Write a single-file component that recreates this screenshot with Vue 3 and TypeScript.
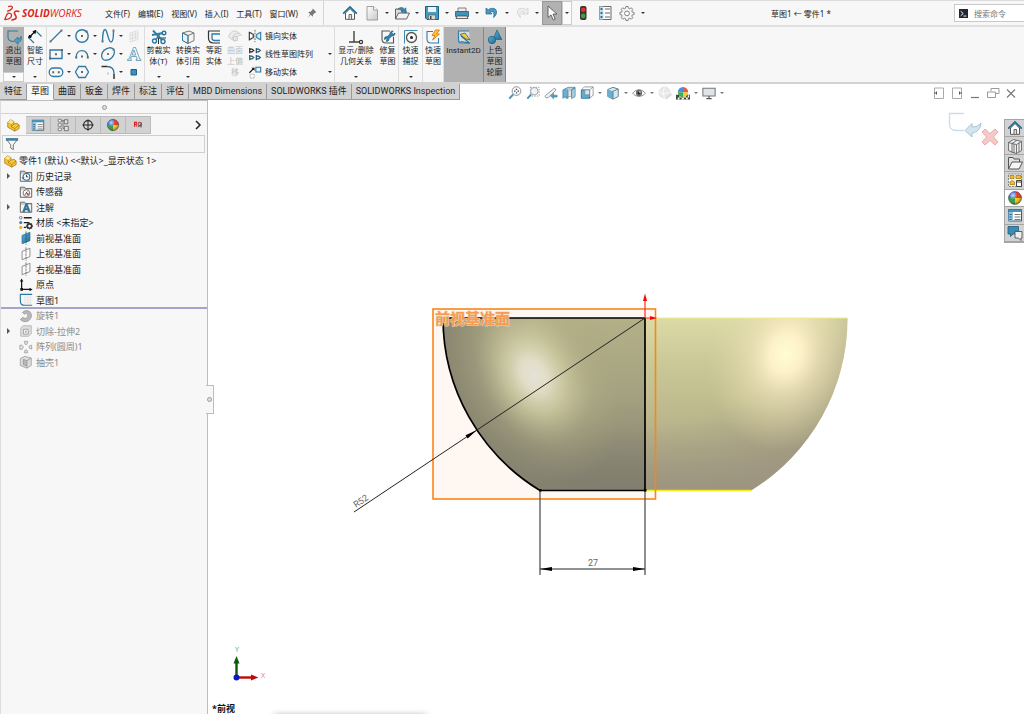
<script setup lang="ts">
import { ref } from 'vue'

interface Tool { icon: string; label: string; caret?: boolean; pressed?: boolean; wide?: boolean }
interface RibbonButton { icon: string; lines: string[]; size: string; caret?: boolean; pressed?: boolean; off?: boolean; rule?: boolean }
interface TreeItem { icon: string; text: string; expand?: boolean; root?: boolean }

const menus = ['文件(F)', '编辑(E)', '视图(V)', '插入(I)', '工具(T)', '窗口(W)']

const quickTools: Tool[] = [
  { icon: 'new', label: '新建', caret: true },
  { icon: 'open', label: '打开', caret: true },
  { icon: 'save', label: '保存', caret: true },
  { icon: 'print', label: '打印', caret: true },
  { icon: 'undo', label: '撤消', caret: true },
  { icon: 'redo', label: '重做', caret: true },
  { icon: 'cursor', label: '选择', caret: true, pressed: true },
  { icon: 'traffic', label: '重建模型', wide: true },
  { icon: 'options', label: '文件属性', wide: true },
  { icon: 'gear', label: '选项', caret: true, wide: true },
]

const sketchTools: Tool[] = [
  { icon: 'line', label: '直线', caret: true },
  { icon: 'circle', label: '圆', caret: true },
  { icon: 'spline', label: '样条曲线', caret: true },
  { icon: 'plane-off', label: '基准面' },
  { icon: 'rect', label: '边角矩形', caret: true },
  { icon: 'arc', label: '圆弧', caret: true },
  { icon: 'ellipse', label: '椭圆', caret: true },
  { icon: 'text', label: '文本' },
  { icon: 'slot', label: '槽口', caret: true },
  { icon: 'polygon', label: '多边形' },
  { icon: 'fillet', label: '圆角', caret: true },
  { icon: 'point', label: '点' },
]

const editButtons: RibbonButton[] = [
  { icon: 'trim', lines: ['剪裁实', '体(T)'], size: 'w27', caret: true },
  { icon: 'convert', lines: ['转换实', '体引用'], size: 'w32', caret: true },
  { icon: 'offset', lines: ['等距', '实体'], size: 'w20' },
  { icon: 'surf-off', lines: ['曲面', '上偏', '移'], size: 'w22', off: true },
]

const patternTools: Tool[] = [
  { icon: 'mirror', label: '镜向实体' },
  { icon: 'pattern', label: '线性草图阵列', caret: true },
  { icon: 'move', label: '移动实体', caret: true },
]

const moreButtons: RibbonButton[] = [
  { icon: 'relation', lines: ['显示/删除', '几何关系'], size: 'w42', caret: true },
  { icon: 'repair', lines: ['修复', '草图'], size: 'w22', rule: true },
  { icon: 'snap', lines: ['快速', '捕捉'], size: 'w24', caret: true, rule: true },
  { icon: 'rapid', lines: ['快速', '草图'], size: 'w21', rule: true },
  { icon: 'instant', lines: ['Instant2D'], size: 'w40', pressed: true, rule: true },
  { icon: 'shaded', lines: ['上色', '草图', '轮廓'], size: 'w22', pressed: true, rule: true },
]

const tabs = ['特征', '草图', '曲面', '钣金', '焊件', '标注', '评估', 'MBD Dimensions', 'SOLIDWORKS 插件', 'SOLIDWORKS Inspection']
const activeTab = ref('草图')

const viewTools: Tool[] = [
  { icon: 'fit', label: '整屏显示全图' },
  { icon: 'zoomarea', label: '局部放大' },
  { icon: 'prevview', label: '上一视图' },
  { icon: 'section', label: '剖面视图' },
  { icon: 'orient', label: '视图定向', caret: true },
  { icon: 'display', label: '显示样式', caret: true },
  { icon: 'eye', label: '隐藏/显示项目', caret: true },
  { icon: 'ball-off', label: '编辑外观' },
  { icon: 'scene', label: '应用布景', caret: true },
  { icon: 'monitor', label: '视图设置', caret: true },
]

const windowTools: Tool[] = [
  { icon: 'dock-l', label: '左侧停靠' },
  { icon: 'dock-r', label: '右侧停靠' },
  { icon: 'min', label: '最小化' },
  { icon: 'restore', label: '还原' },
  { icon: 'close', label: '关闭' },
]

const panelTabs: Tool[] = [
  { icon: 'part', label: '设计树' },
  { icon: 'list', label: '属性管理器' },
  { icon: 'config', label: '配置管理器' },
  { icon: 'target', label: '尺寸管理器' },
  { icon: 'ball', label: '外观管理器' },
  { icon: 'ext', label: '插件管理器' },
]
const activePanel = ref('part')

const activeItems: TreeItem[] = [
  { icon: 'part', text: '零件1 (默认) <<默认>_显示状态 1>', root: true },
  { icon: 'history', text: '历史记录', expand: true },
  { icon: 'sensor', text: '传感器' },
  { icon: 'annot', text: '注解', expand: true },
  { icon: 'material', text: '材质 <未指定>' },
  { icon: 'plane-on', text: '前视基准面' },
  { icon: 'plane', text: '上视基准面' },
  { icon: 'plane', text: '右视基准面' },
  { icon: 'origin', text: '原点' },
  { icon: 'sketch', text: '草图1' },
]
const rolledBack: TreeItem[] = [
  { icon: 'revolve', text: '旋转1' },
  { icon: 'cut', text: '切除-拉伸2', expand: true },
  { icon: 'circpat', text: '阵列(圆周)1' },
  { icon: 'shell', text: '抽壳1' },
]

const taskTabs: Tool[] = [
  { icon: 'home', label: '资源' },
  { icon: 'library', label: '设计库' },
  { icon: 'folder', label: '文件探索器' },
  { icon: 'palette', label: '视图调色板' },
  { icon: 'ball', label: '外观、布景和贴图', pressed: true },
  { icon: 'list', label: '自定义属性' },
  { icon: 'forum', label: '论坛' },
]
const command = ref('')
</script>

<template>
  <div class="app">
    <svg class="sprite" width="0" height="0" aria-hidden="true">
      <defs>
        <linearGradient id="gBlue" x1="0" y1="0" x2="1" y2="1"><stop offset="0" stop-color="#5fb0d6" /><stop offset="1" stop-color="#1c6a93" /></linearGradient>
        <linearGradient id="gGrey" x1="0" y1="0" x2="1" y2="1"><stop offset="0" stop-color="#fff" /><stop offset="1" stop-color="#c9c9c9" /></linearGradient>
        <radialGradient id="gShine" cx=".35" cy=".3" r=".7"><stop offset="0" stop-color="#fff" stop-opacity=".75" /><stop offset=".5" stop-color="#fff" stop-opacity="0" /><stop offset="1" stop-color="#000" stop-opacity=".35" /></radialGradient>
      </defs>
      <symbol id="home" viewBox="0 0 16 16"><path d="M3.500 8v6.300h9V8L8 3.600z" fill="#fff" stroke="#555" /><path d="M7 14V9.500h2.600V14" fill="#ddd" stroke="#555" stroke-width=".9" /><path d="M1.200 8.600 8 2l6.800 6.600" fill="none" stroke="#1f6e98" stroke-width="1.700" /></symbol>
      <symbol id="new" viewBox="0 0 16 16"><path d="M3 1.500h6.500L13.500 5v10H3z" fill="url(#gGrey)" stroke="#8a8a8a" stroke-width=".8" /><path d="M9.500 1.500V5h4" fill="#fff" stroke="#8a8a8a" stroke-width=".8" /></symbol>
      <symbol id="open" viewBox="0 0 16 16"><path d="M1.500 14V4H6l1 1.500h5V8" fill="#ddd" stroke="#555" stroke-width=".9" /><path d="M1.500 14 4.500 8H15.500l-3 6z" fill="#f4f4f4" stroke="#555" stroke-width=".9" /><path d="M3.500 4.500C6 1.500 9 2 10.500 4L12 2.800V8L7 7l1.500-1.400C7.500 4 5.500 3.500 3.500 4.500z" fill="#3888b0" stroke="#1c5f83" stroke-width=".5" /></symbol>
      <symbol id="save" viewBox="0 0 16 16"><path d="M1.500 1.500h13v13H3L1.500 13z" fill="#4a9ac0" stroke="#1d5d80" /><path d="M4 2h8v5H4z" fill="#f1f1f1" /><path d="M4.500 10h7v4.500h-7z" fill="#d8d8d8" stroke="#555" stroke-width=".6" /><path d="M6 11h1.500v3H6z" fill="#444" /></symbol>
      <symbol id="print" viewBox="0 0 16 16"><path d="M4 3h8v4H4z" fill="#eee" stroke="#666" stroke-width=".8" /><path d="M1.500 6.500h13v5h-13z" fill="#4193bb" stroke="#1d5d80" stroke-width=".8" /><path d="M3 11h10l1 2.500H2z" fill="#eee" stroke="#444" stroke-width=".8" /></symbol>
      <symbol id="undo" viewBox="0 0 16 16"><path d="M2 3v6h6L6 7c2.500-1.200 5 .5 3.500 5.500 4.500-3 4-9.500-1-9.200C6.500 3.400 5 4 4.300 4.800z" fill="#4a97bf" stroke="#1f668c" stroke-width=".7" /></symbol>
      <symbol id="redo" viewBox="0 0 16 16"><path d="M14 3v6H8l2-2c-2.500-1.200-5 .5-3.500 5.500C2 9.500 2.500 3 7.500 3.300c2 .1 3.500.7 4.200 1.500z" fill="#eee" stroke="#cfcfcf" stroke-width=".8" /></symbol>
      <symbol id="cursor" viewBox="0 0 16 16"><path d="M4 1v11.500l3-2.600 2.200 5 2-.9-2.200-4.900h4z" fill="#fff" stroke="#555" stroke-width=".9" /></symbol>
      <symbol id="traffic" viewBox="0 0 16 16"><rect x="5" y="1" width="6.500" height="14" rx="2" fill="#3d3030" /><circle cx="8.200" cy="4.700" r="2.300" fill="#e0342c" /><circle cx="8.200" cy="11" r="2.400" fill="#37a045" /></symbol>
      <symbol id="options" viewBox="0 0 16 16"><path d="M2.500 1.500h11.500v13H2.500z" fill="#fff" stroke="#666" /><path d="M2.500 1.500h4v13h-4z" fill="#c9dce6" /><path d="M3.500 4h2M3.500 8h2M3.500 12h2" stroke="#2576a2" stroke-width="2" /><path d="M8 4h5M8 8h5M8 12h5" stroke="#666" /></symbol>
      <symbol id="gear" viewBox="0 0 16 16"><path d="M6.900 1.500h2.200l.4 1.800 1.200.5 1.600-1 1.500 1.600-1 1.500.5 1.200 1.800.4v2l-1.800.4-.5 1.200 1 1.600-1.500 1.500-1.600-1-1.200.5-.4 1.800H6.900l-.4-1.800-1.200-.5-1.600 1-1.500-1.500 1-1.600-.5-1.200-1.800-.4v-2l1.800-.4.5-1.200-1-1.500 1.500-1.600 1.600 1 1.200-.5z" fill="#f6f6f6" stroke="#777" stroke-width=".9" /><circle cx="8" cy="8.400" r="2.400" fill="#fff" stroke="#777" stroke-width=".9" /></symbol>
      <symbol id="pin" viewBox="0 0 16 16"><path d="m9 2 5 5-2 .5-2.500 2.500-.5 3-2.700-2.700L2 14.500l3.500-5L3 6.800l3-.5L8.500 4z" fill="#777" /></symbol>
      <symbol id="prompt" viewBox="0 0 16 16"><path d="M0 0h16v16H0z" fill="#222733" /><path d="m3 4 4.500 4L3 12M8 12.500h5" fill="none" stroke="#fff" stroke-width="1.700" /></symbol>

      <symbol id="exit" viewBox="0 0 16 16"><path d="M12 2H2v6c0 3 2 4.500 6 4.500" fill="none" stroke="#2d7ba4" stroke-width="1.100" /><path d="M8 11.500 12 8v2c1.500 0 2.500-1 3-3 1.200 4-.5 6-3 6.300V15.500z" fill="#4a9cc4" stroke="#1d668d" stroke-width=".6" /></symbol>
      <symbol id="dimension" viewBox="0 0 16 16"><path d="M2 8.500 8.500 2" stroke="#111" stroke-width="1.300" /><path d="m1.500 9 1-3 2 2zM9 1.500 6 2.500l2 2z" fill="#111" stroke="#111" /><path d="M2 9l5 5M9.500 2.500l5 5" stroke="#2d7ba4" stroke-width="1.200" /></symbol>
      <symbol id="line" viewBox="0 0 16 16"><path d="M2.500 13.500 13.500 2.500" stroke="#3079a2" stroke-width="1.300" /><path d="M1.500 12.500h2v2h-2zM12.500 1.500h2v2h-2z" fill="#777" /></symbol>
      <symbol id="circle" viewBox="0 0 16 16"><circle cx="8" cy="8" r="6.200" fill="none" stroke="#3079a2" stroke-width="1.400" /><path d="M7 7h2v2H7zM11.500 2.500h2v2h-2z" fill="#666" /></symbol>
      <symbol id="spline" viewBox="0 0 16 16"><path d="M2.500 14C2.500 6 3.500 1.500 5 1.500c2.500 0 3 12.500 6 12.500 1.800 0 2.500-5 2.500-11" fill="none" stroke="#3079a2" stroke-width="1.400" /><path d="M1.500 12.500h2v2h-2zM12.500 1.500h2v2h-2z" fill="#777" /></symbol>
      <symbol id="plane-off" viewBox="0 0 16 16"><path d="M4 5 12 2.500v9L4 14z" fill="#f2f2f2" stroke="#d2d2d2" stroke-dasharray="1.500 1" /><path d="M6.500 4v9M9.500 3v9M4 8l8-2.500M4 11l8-2.500" stroke="#dadada" stroke-width=".8" /></symbol>
      <symbol id="rect" viewBox="0 0 16 16"><path d="M2 4h12v8.500H2z" fill="none" stroke="#3079a2" stroke-width="1.400" /><path d="M1 11.500h2v2H1zM13 3h2v2h-2zM7 7.300h2v2H7z" fill="#666" /></symbol>
      <symbol id="arc" viewBox="0 0 16 16"><path d="M2.200 11C2.200 2.500 13.800 2.500 13.800 11" fill="none" stroke="#3079a2" stroke-width="1.400" /><path d="M1.200 10.500h2v2h-2zM12.800 10.500h2v2h-2zM7 9.500h2v2H7z" fill="#666" /></symbol>
      <symbol id="ellipse" viewBox="0 0 16 16"><ellipse cx="8" cy="8" rx="7.200" ry="5.300" transform="rotate(-42 8 8)" fill="none" stroke="#3079a2" stroke-width="1.300" /><path d="M7 7h2v2H7zM12.500 2.500h2v2h-2zM3.500 3.500h1.500V5H3.500z" fill="#777" /></symbol>
      <symbol id="text" viewBox="0 0 16 16"><path d="M1.500 14.500h4v-1l-1-.3.8-2.700h5l.9 2.700-1.200.3v1h5v-1l-1.200-.5L9.500 1.500h-2L3 13l-1.500.5zM6 9l2-5 1.800 5z" fill="#f1f8fb" stroke="#5793b3" stroke-width=".8" /></symbol>
      <symbol id="slot" viewBox="0 0 16 16"><rect x="1.200" y="4" width="13.600" height="8.500" rx="4.200" fill="none" stroke="#3079a2" stroke-width="1.300" /><path d="M4.200 7.300h2v2h-2zM9.800 7.300h2v2h-2z" fill="#666" /></symbol>
      <symbol id="polygon" viewBox="0 0 16 16"><path d="M4.700 2.500h6.600L14.500 8l-3.200 5.500H4.700L1.500 8z" fill="none" stroke="#3079a2" stroke-width="1.300" /><path d="M7 7h2v2H7z" fill="#666" /></symbol>
      <symbol id="fillet" viewBox="0 0 16 16"><path d="M1.500 2.500H7M14 9.500V15" fill="none" stroke="#333" stroke-width="1.500" /><path d="M7 2.500c4.500 0 7 2.500 7 7" fill="none" stroke="#3079a2" stroke-width="1.300" /><path d="M7 8.500h2v2H7z" fill="#ccc" /></symbol>
      <symbol id="point" viewBox="0 0 16 16"><path d="M5 5.500h5.500V11H5z" fill="#3d8fb9" stroke="#1e6187" /></symbol>
      <symbol id="trim" viewBox="0 0 16 16"><path d="M7.500 8.500v6.500M7.500 9H15" stroke="#333" /><path d="m2 1.500 9 9.500M1 6l11-2" stroke="#2e7ea8" stroke-width="1.900" /><circle cx="12" cy="12.500" r="2" fill="#fff" stroke="#2576a2" stroke-width="1.400" /><circle cx="13" cy="4" r="1.800" fill="#fff" stroke="#2576a2" stroke-width="1.400" /><circle cx="3.500" cy="12" r="2" fill="#fff" stroke="#2576a2" stroke-width="1.400" /><path d="m5 10.500 4-6" stroke="#2e7ea8" stroke-width="1.500" /></symbol>
      <symbol id="convert" viewBox="0 0 16 16"><path d="M2.500 4 9 2l5 2v7.500L8 14.500l-5.500-3z" fill="#f3f3f3" stroke="#777" /><path d="M2.500 4v7.500L8 14.500v-8z" fill="#e6f2f8" stroke="#2a7ba5" /><path d="M2.500 4 8 6.500 14 4M8 6.500v8" fill="none" stroke="#777" /></symbol>
      <symbol id="offset" viewBox="0 0 16 16"><path d="M14 2H2.500v7c0 3 2 5 5 5H14" fill="none" stroke="#333" stroke-width="1.200" /><path d="M14 5H6v4c0 1.500 1 2.500 2.500 2.500H14" fill="none" stroke="#2a7ba5" stroke-width="1.300" /></symbol>
      <symbol id="surf-off" viewBox="0 0 16 16"><path d="M1.500 8C3 3 6 1.500 9 2l5.500 4c-3.500 0-5.500 2-6.500 6.500z" fill="#ececec" stroke="#cfcfcf" /><path d="M5 10.500C6 6 8.500 4 12 4.200M6.500 7.500h4v4h-4z" fill="none" stroke="#cfcfcf" /></symbol>
      <symbol id="mirror" viewBox="0 0 16 16"><path d="M8 1v14" stroke="#555" stroke-dasharray="2 1.200" /><path d="M1.500 3v10M1.500 4.500h1.500c1 0 1 1.500 3 1.500v4c-2 0-2 1.500-3 1.500H1.500" fill="#fff" stroke="#333" stroke-width="1.300" /><path d="M14.500 3v10M14.500 4.500H13c-1 0-1 1.500-3 1.500v4c2 0 2 1.500 3 1.500h1.500" fill="#e1f0f7" stroke="#2e7ea8" stroke-width="1.300" /></symbol>
      <symbol id="pattern" viewBox="0 0 16 16"><g fill="#fff" stroke-width="1.400"><path d="M2 1v6M2 2.500h2.500L6.500 4 4.500 5.500H2" stroke="#222" /><path d="M9.500 1v6M9.500 2.500H12L14 4l-2 1.500H9.500M2 9v6M2 10.500h2.500l2 1.500-2 1.500H2M9.500 9v6M9.500 10.500H12l2 1.500-2 1.500H9.500" stroke="#25566d" /></g></symbol>
      <symbol id="move" viewBox="0 0 16 16"><path d="M9 2.500h5.500V8H9z" fill="#eaf5fa" stroke="#2475a0" stroke-width="1.200" /><path d="M2.500 10.500h4.500V15H2.500z" fill="#fff" stroke="#bbb" /><path d="m1.500 9 5-5" stroke="#111" stroke-width="1.300" /><path d="M7.500 3v3.500L4 3z" fill="#111" /></symbol>
      <symbol id="relation" viewBox="0 0 16 16"><path d="M6 2v11M1 13h10" stroke="#444" stroke-width="1.400" /><circle cx="13" cy="13" r="1.600" fill="#fff" stroke="#333" stroke-width="1.200" /></symbol>
      <symbol id="repair" viewBox="0 0 16 16"><path d="M10 2H2v8c0 2.500 1.500 4 4 4h7.500V8" fill="none" stroke="#555" stroke-width="1.100" /><path d="M4.500 10.500c-.5-2 1-3.300 2.500-2.800L10 5c-.5-2 1.500-3.500 3.200-3l-1.400 1.700 1.400 1.500L15 4c.3 2-1.300 3.500-3.200 3L9 9.800c.3 1.800-1.500 3-3 2.500l1.200-1.500-1-1z" fill="#3282ac" stroke="#16506f" stroke-width=".6" /></symbol>
      <symbol id="snap" viewBox="0 0 16 16"><path d="M1.500 1.500h13M1.500 1.500v13" stroke="#2d7ba4" stroke-width=".9" /><circle cx="8.500" cy="8.500" r="5" fill="none" stroke="#555" stroke-width="1.300" /><circle cx="8.500" cy="8.500" r="1.500" fill="#222" /></symbol>
      <symbol id="rapid" viewBox="0 0 16 16"><path d="M8 2.500H2V10c0 2.500 1.500 4 4 4h7.500V9" fill="none" stroke="#2f7ea7" stroke-width="1.100" /><path d="m10.500 1-3.500 5.500h3L7.500 11 14.500 5H11.500L14.500 1z" fill="#ffc629" stroke="#e0671c" stroke-width=".8" /></symbol>
      <symbol id="instant" viewBox="0 0 16 16"><path d="M13 2H2.500v9c0 2 1 3 3 3H14" fill="#cfe0e9" stroke="#317fa7" stroke-width="1.200" /><path d="M4 5.500 9 4l5 7-4-1z" fill="#f6cf3e" stroke="#444" stroke-width=".7" /><path d="M4.500 12.500 14 14M5 7l8 6.500" stroke="#2b6f92" stroke-width="1.100" /></symbol>
      <symbol id="shaded" viewBox="0 0 16 16"><path d="m10 1 4.800 9.500H6z" fill="url(#gBlue)" stroke="#1c5f83" stroke-width=".7" /><circle cx="5" cy="11" r="3.700" fill="url(#gBlue)" stroke="#1c5f83" stroke-width=".8" /></symbol>

      <symbol id="fit" viewBox="0 0 16 16"><circle cx="9.700" cy="5.800" r="5" fill="#f4f8fa" stroke="#888" /><path d="m6 9.500-4.500 5" stroke="#4790b6" stroke-width="2.200" /><path d="M9.700 3v1.500M9.700 7v1.500M7 5.800h1.500M11 5.800h1.500" stroke="#444" stroke-width="1.300" /></symbol>
      <symbol id="zoomarea" viewBox="0 0 16 16"><path d="M5 1.500h10v10H5z" fill="none" stroke="#888" stroke-dasharray="1.500 1.500" /><circle cx="9.500" cy="6" r="4.300" fill="#eef5f9" stroke="#999" /><path d="m6 9.500-4.500 5" stroke="#4790b6" stroke-width="2.200" /></symbol>
      <symbol id="prevview" viewBox="0 0 16 16"><path d="M1.500 11 10 4c2-2.500 4.500-.5 3 1.500l-8 7.500c-2 1.500-4.500 0-3.500-2z" fill="#f4f4f4" stroke="#888" /><path d="m7.500 11.500 3.500-3v2h4v2.200h-4v2z" fill="#4e9cc4" stroke="#2b7093" stroke-width=".5" /></symbol>
      <symbol id="section" viewBox="0 0 16 16"><path d="M1 4.500 4.500 3 7 4.500V14H4.500V12L1 14z" fill="#6cb0d1" stroke="#2b7093" stroke-width=".7" /><path d="M7 4.500h4V12H7z" fill="#e4e4e4" stroke="#888" stroke-width=".7" /><path d="M11 4.500 15 2v10l-4 2.500zM3 3.500 7 1.500h8l-4 3" fill="#a9d0e3" stroke="#2b7093" stroke-width=".7" /></symbol>
      <symbol id="orient" viewBox="0 0 16 16"><path d="M5 1h10v10M1.500 4.500 5 1M11 4.500 15 1M11 14l4-3.500" fill="none" stroke="#888" stroke-width=".9" /><path d="M1.500 4.500H11V14H1.500z" fill="#62aace" stroke="#2b7093" /><path d="M5.500 4.500H11V10H5.500z" fill="#cfe5f0" stroke="#777" stroke-width=".6" /></symbol>
      <symbol id="display" viewBox="0 0 16 16"><path d="m2 4 6-2.500 6 2V12l-6 3-6-3z" fill="#d5e9f3" stroke="#5d7683" /><path d="m2 4 6 2v9l-6-3z" fill="#68afd2" /><path d="m8 6 6-2.500M8 6v9" stroke="#5d7683" /></symbol>
      <symbol id="eye" viewBox="0 0 16 16"><path d="M.8 8.300C4.500 3 11.500 3 15.200 8.300 11.500 13 4.500 13 .8 8.300z" fill="#fff" stroke="#888" stroke-width="1.100" /><circle cx="8" cy="8" r="3.600" fill="#6d6d6d" /><circle cx="8" cy="8" r="1.500" fill="#222" /><circle cx="9" cy="6.800" r=".9" fill="#fff" /></symbol>
      <symbol id="ball-off" viewBox="0 0 16 16"><circle cx="7.500" cy="7.500" r="6.300" fill="#e9e9e9" stroke="#dedede" /><path d="M7.500 1.500c-2 4-2 8 0 12M1.500 7.500c4 1.500 8 1.500 12 0" fill="none" stroke="#fafafa" /><path d="M9 14.500 15.500 9" stroke="#ddd" stroke-width="2.500" /></symbol>
      <symbol id="ball" viewBox="0 0 16 16"><path d="M8 8V1.500A6.500 6.500 0 0 0 1.500 8z" fill="#2b66d0" /><path d="M8 8h6.500A6.500 6.500 0 0 0 8 1.500z" fill="#e53427" /><path d="M8 8v6.500A6.500 6.500 0 0 0 14.500 8z" fill="#f6c915" /><path d="M8 8H1.500A6.500 6.500 0 0 0 8 14.500z" fill="#2f9c3c" /><circle cx="8" cy="8" r="6.500" fill="url(#gShine)" stroke="#333" stroke-width=".5" /></symbol>
      <symbol id="scene" viewBox="0 0 16 16"><path d="M0 10h16v5.500H0z" fill="#444" /><path d="M2 13h2v2.500H2zM6.500 13h2.500v2.500H6.500zM11.500 13h2v2.500h-2zM4 10.500h2.500V13H4zM9 10.500h2.500V13H9zM13.500 10.500H15V13h-1.500z" fill="#fff" /><path d="M8 7V1a6 6 0 0 0-6 6z" fill="#4a8fe0" /><path d="M8 7h6a6 6 0 0 0-6-6z" fill="#ec564b" /><path d="M8 7v6a6 6 0 0 0 6-6z" fill="#edcb3b" /><path d="M8 7H2a6 6 0 0 0 6 6z" fill="#46aa54" /></symbol>
      <symbol id="monitor" viewBox="0 0 16 16"><path d="M1 2.500h14v9H1z" fill="#dfe4e6" stroke="#777" stroke-width="1.200" /><path d="M8 11.500v2.500M5 14.500h6" stroke="#555" stroke-width="1.300" /></symbol>
      <symbol id="dock-l" viewBox="0 0 16 16"><path d="M3.500 3h9v10.500h-9z" fill="#fff" stroke="#aaa" /><path d="M3 8h3M5.500 6.500v3" stroke="#555" /></symbol>
      <symbol id="dock-r" viewBox="0 0 16 16"><path d="M3.500 3h9v10.500h-9z" fill="#fff" stroke="#aaa" /><path d="M10 8h3M10.500 6.500v3" stroke="#555" /></symbol>
      <symbol id="min" viewBox="0 0 16 16"><path d="M4 12.500h8" stroke="#777" stroke-width="1.200" /></symbol>
      <symbol id="restore" viewBox="0 0 16 16"><path d="M6 6V3.500h8v5h-3" fill="none" stroke="#999" /><path d="M2.500 7H10.500v5.500h-8z" fill="#fff" stroke="#999" /></symbol>
      <symbol id="close" viewBox="0 0 16 16"><path d="m4 4.500 8 8M12 4.500l-8 8" stroke="#777" stroke-width="1.100" /></symbol>

      <symbol id="part" viewBox="0 0 16 16"><path d="m2 5 3-3 4 2v3l3.500-1L15 8v4l-5 3-8-4.500z" fill="#f5c83a" stroke="#a87b12" stroke-width=".9" /><path d="m2 5 4 2v3l4 2 5-4M6 7l3-3M6 10l3-3M10 12v3" fill="none" stroke="#a87b12" stroke-width=".8" /><path d="m2 5 3-3 4 2-3 3z" fill="#fbe48a" /></symbol>
      <symbol id="list" viewBox="0 0 16 16"><path d="M1.500 2.500h13v11.500h-13z" fill="#fff" stroke="#3a5c70" /><path d="M1.500 2.500h13V5h-13z" fill="#4494bc" /><path d="M1.500 5H6v9H1.500z" fill="#8fc1da" /><path d="M2.500 7.500h2M2.500 10h2M2.500 12.500h2" stroke="#1d5d80" /><path d="M7.500 7.500h6M7.500 10h6M7.500 12.500h6" stroke="#777" /></symbol>
      <symbol id="config" viewBox="0 0 16 16"><path d="M2.500 1.500H6v3H2.500zM2.500 6.500H6v3H2.500zM2.500 11.500H6v3H2.500z" fill="#fff" stroke="#777" /><path d="M6 3h4M8 3v9h2" fill="none" stroke="#777" /><path d="M9.500 2h4v4.500h-4zM9.500 9.500h4.500v5H9.500z" fill="#e6e6e6" stroke="#666" /></symbol>
      <symbol id="target" viewBox="0 0 16 16"><circle cx="8" cy="8" r="5" fill="none" stroke="#222" stroke-width="1.200" /><path d="M8 1.500v13M1.500 8h13" stroke="#222" stroke-width="1.100" /></symbol>
      <symbol id="ext" viewBox="0 0 16 16"><path d="M4 5v5M6 5v5M3.500 5h3.500M3.500 7.500h3" stroke="#d22" stroke-width="1.200" /><circle cx="10" cy="7" r="2" fill="none" stroke="#a44" stroke-width="1.200" /><path d="M8 10.500 12 6M11.500 8v3" stroke="#444" /></symbol>
      <symbol id="funnel" viewBox="0 0 16 16"><path d="M1.500 2.500h13L9.500 9v5.500l-3-2V9z" fill="#f4f4f4" stroke="#666" /><path d="M1.500 1.800h13v2h-13z" fill="#3b8cb5" stroke="#1d5d80" stroke-width=".6" /></symbol>
      <symbol id="folderbase" viewBox="0 0 16 16"><path d="M1.500 14V2.500h5l1 1.500h7V14z" fill="#f4f4f4" stroke="#555" /><path d="M1.500 4.500h13" stroke="#777" stroke-width=".7" /></symbol>
      <symbol id="history" viewBox="0 0 16 16"><use href="#folderbase" /><circle cx="8.500" cy="9" r="3.800" fill="#fff" stroke="#2b759b" stroke-width="1.300" /><path d="M8.500 6.500V9h2" fill="none" stroke="#222" /><path d="M3 9.500h3.500L4.500 12z" fill="#2b759b" /></symbol>
      <symbol id="sensor" viewBox="0 0 16 16"><use href="#folderbase" /><circle cx="8.500" cy="9.200" r="3.800" fill="#fff" stroke="#666" /><path d="m7 11 2.500-3.500" stroke="#222" /><circle cx="10" cy="10.300" r="1.300" fill="#d33" /></symbol>
      <symbol id="annot" viewBox="0 0 16 16"><use href="#folderbase" /><path d="M4 13.500 7.500 4.500h2l3.500 9h-2.500l-.6-2H7l-.6 2zM7.500 9.800h2L8.500 7z" fill="#2b7ba5" stroke="#174f6d" stroke-width=".4" /></symbol>
      <symbol id="material" viewBox="0 0 16 16"><circle cx="2" cy="2" r="1.500" fill="#fff" stroke="#555" stroke-width=".8" /><circle cx="2" cy="7.500" r="1.800" fill="#3a8ab4" /><circle cx="2" cy="13" r="1.800" fill="#e7b41f" /><path d="M5.500 2h9M5.500 7.500h6M5.500 13h3" stroke="#222" stroke-width="1.500" /><circle cx="12" cy="11.500" r="2.500" fill="#fff" stroke="#333" stroke-width="1.900" /><path d="M12 7.500v1.500M12 14v1.500M8.200 11.500h1.300M14.500 11.500h1.300M9.300 8.800l1 1M14.700 8.800l-1 1M9.300 14.200l1-1M14.700 14.200l-1-1" stroke="#333" stroke-width="1.300" /></symbol>
      <symbol id="plane-on" viewBox="0 0 16 16"><path d="m3.500 5 9-3.500v9.500l-9 3.500z" fill="url(#gBlue)" stroke="#1d668d" stroke-width=".8" /><path d="M8 .5v15" stroke="#154f6e" stroke-width=".9" stroke-dasharray="2.500 1" /></symbol>
      <symbol id="plane" viewBox="0 0 16 16"><path d="m3.500 5 9-3.500v9.500l-9 3.500z" fill="#fbfbfb" stroke="#777" stroke-width=".9" /><path d="M8 .5v15" stroke="#555" stroke-width=".9" stroke-dasharray="2.500 1" /></symbol>
      <symbol id="origin" viewBox="0 0 16 16"><path d="M3 3v10h10" fill="none" stroke="#111" stroke-width="1.400" /><path d="m3 .5 2 3.500H1zM15.500 13 12 11v4zM1.500 11.500h3v3h-3z" fill="#111" /></symbol>
      <symbol id="sketch" viewBox="0 0 16 16"><path d="M6 5h9M6 8h9M6 11h9M7 2v11M10 2v11M13 2v11" stroke="#e4e4e4" stroke-width=".8" /><path d="M15 1.500H1.500V9c0 3 1.500 5 5 5H15" fill="none" stroke="#2b7ba5" stroke-width="1.300" /></symbol>
      <symbol id="revolve" viewBox="0 0 16 16"><path d="M4 4C9-1 15.500 3.500 14 9s-8 7.500-12.500 3l3-2.500c2 2 5 1.500 5.500-1.500S8 4.500 6.500 6z" fill="#b9b9b9" stroke="#8f8f8f" stroke-width=".8" /></symbol>
      <symbol id="cut" viewBox="0 0 16 16"><path d="M2 4.500 5 2h9v9l-3 3H2z" fill="#dedede" stroke="#b5b5b5" /><path d="M5 6h5.500v5.500H5z" fill="#fff" stroke="#999" /><path d="M6.500 7.500h2.500V10H6.500z" fill="#b4b4b4" /></symbol>
      <symbol id="circpat" viewBox="0 0 16 16"><g fill="#e6e6e6" stroke="#a0a0a0"><path d="M6 1.500h4L9 5H7zM6 14.500h4L9 11.500H7zM14.500 6v4.500L11.500 9V7zM1 6h2.500l1.500 2-1.500 2.500H1z" /></g></symbol>
      <symbol id="shell" viewBox="0 0 16 16"><path d="M1.500 4 7 1.500l7 2V12L9 15l-7.500-3z" fill="#dcdcdc" stroke="#a5a5a5" /><path d="M5 5v6l4 1.500V6.500zM9 6.500l5-3M9 12.500V15" fill="#b8b8b8" stroke="#999" /></symbol>
      <symbol id="library" viewBox="0 0 16 16"><g fill="#eee" stroke="#555" stroke-width=".8"><path d="m1.500 4.500 5-3 8 2v9l-5 3-3.500-1-4.500-2z" /><path d="M1.500 4.500 5 5.500v9M5 5.500l4.500 1v9M9.500 6.500l5-3M5 5.500l4.500-3M7 6v9M12 5v9" fill="none" /></g></symbol>
      <symbol id="folder" viewBox="0 0 16 16"><path d="M1.500 14V2.500H6l1 1.500h5.500v3" fill="#e2e2e2" stroke="#555" /><path d="m1.500 14 3.500-7h10.500L12 14z" fill="#f6f6f6" stroke="#555" /></symbol>
      <symbol id="palette" viewBox="0 0 16 16"><path d="M1.500 2h13v12.500h-13z" fill="#f1f1f1" stroke="#888" stroke-dasharray="2 1" /><path d="M3 3.500h4v3H3zM9 3.500h5v3H9zM3 12.500V10l2-1.500L7.500 10v2.500z" fill="#f2c02a" stroke="#9b7410" stroke-width=".7" /><path d="M9.500 8.500h5v6h-5z" fill="#fff" stroke="#444" /><path d="M9.500 10h5" stroke="#444" /></symbol>
      <symbol id="forum" viewBox="0 0 16 16"><path d="M1 1.500h10.500V9H6l-2.500 2.500V9H1z" fill="#3a8ab4" stroke="#1d5d80" stroke-width=".8" /><path d="M8 6.500h7V13h-1v2.500L11.500 13H8z" fill="#eee" stroke="#555" stroke-width=".9" /></symbol>
    </svg>

    <header class="titlebar">
      <div class="brand-area">
        <svg class="ds" viewBox="0 0 16 17" aria-hidden="true">
          <g fill="none" stroke="#d9261c" stroke-linecap="round">
            <path d="M4.500 1.500C8 .5 9.500 2 7.500 4 6.500 5 5 5.800 3.500 6.200" stroke-width="1.300" />
            <path d="M.8 14.500C3 8.500 3.500 7.500 6.500 8.500c2 1 1.500 5.500-5.200 6" stroke-width="1.300" />
            <path d="M14.800 6.500c-3-1.500-5.500.5-3.800 3s2.500 4.500-3 5.500" stroke-width="1.500" />
          </g>
        </svg>
        <span class="brand"><b>SOLID</b>WORKS</span>
        <nav class="menus"><button v-for="m in menus" :key="m" type="button">{{ m }}</button></nav>
        <button type="button" class="pin" aria-label="固定"><svg class="ic12" viewBox="0 0 16 16"><use href="#pin" /></svg></button>
      </div>
      <div class="quick">
        <button type="button" class="q home" aria-label="主页"><svg class="ic"><use href="#home" /></svg></button>
        <div v-for="t in quickTools" :key="t.icon" class="split" :class="{ pressed: t.pressed, wide: t.wide }">
          <button type="button" class="q" :aria-label="t.label"><svg class="ic"><use :href="'#' + t.icon" /></svg></button>
          <button v-if="t.caret" type="button" class="drop" :aria-label="t.label + '菜单'"><i class="caret" /></button>
        </div>
      </div>
      <h1 class="doc">草图1 ← 零件1 *</h1>
      <label class="search">
        <svg class="ic9"><use href="#prompt" /></svg>
        <input v-model="command" type="text" placeholder="搜索命令" aria-label="搜索命令">
      </label>
    </header>

    <section class="ribbon">
      <div class="exit">
        <button type="button" class="exit-main"><svg class="ic"><use href="#exit" /></svg><span>退出</span><span>草图</span></button>
        <button type="button" class="exit-drop" aria-label="退出草图菜单"><i class="caret" /></button>
      </div>
      <button type="button" class="big w22"><svg class="ic"><use href="#dimension" /></svg><span>智能</span><span>尺寸</span><i class="caret" /></button>
      <div class="grid">
        <div v-for="t in sketchTools" :key="t.icon" class="cell">
          <button type="button" :aria-label="t.label"><svg class="ic"><use :href="'#' + t.icon" /></svg></button>
          <button v-if="t.caret" type="button" class="drop" :aria-label="t.label + '菜单'"><i class="caret" /></button>
        </div>
      </div>
      <button v-for="b in editButtons" :key="b.icon" type="button" class="big" :class="[b.size, { off: b.off }]" :disabled="b.off">
        <svg class="ic"><use :href="'#' + b.icon" /></svg><span v-for="l in b.lines" :key="l">{{ l }}</span><i v-if="b.caret" class="caret" />
      </button>
      <div class="rows">
        <button v-for="t in patternTools" :key="t.icon" type="button"><svg class="ic14"><use :href="'#' + t.icon" /></svg><span>{{ t.label }}</span><i v-if="t.caret" class="caret" /></button>
      </div>
      <button v-for="b in moreButtons" :key="b.icon" type="button" class="big" :class="[b.size, { rule: b.rule, pressed: b.pressed }]">
        <svg class="ic"><use :href="'#' + b.icon" /></svg><span v-for="l in b.lines" :key="l">{{ l }}</span><i v-if="b.caret" class="caret" />
      </button>
    </section>

    <nav class="tabs">
      <button v-for="t in tabs" :key="t" type="button" :class="{ active: t === activeTab }" @click="activeTab = t">{{ t }}</button>
    </nav>

    <main class="work">
      <aside class="panel">
        <div class="grip"><i class="dot" /></div>
        <div class="ptabs">
          <button v-for="t in panelTabs" :key="t.icon" type="button" :aria-label="t.label" :class="{ active: t.icon === activePanel }" @click="activePanel = t.icon"><svg class="ic14"><use :href="'#' + t.icon" /></svg></button>
          <button type="button" class="more" aria-label="更多"><svg class="ic12" viewBox="0 0 12 12"><path d="m4 2 4 4-4 4" fill="none" stroke="#222" stroke-width="1.500" /></svg></button>
        </div>
        <label class="filter"><svg class="ic14"><use href="#funnel" /></svg><input type="text" aria-label="过滤"></label>
        <ul class="tree live">
          <li v-for="n in activeItems" :key="n.text" :class="{ root: n.root }"><i class="exp" :class="{ on: n.expand }" /><svg class="ic14"><use :href="'#' + n.icon" /></svg><span>{{ n.text }}</span></li>
        </ul>
        <ul class="tree rolled">
          <li v-for="n in rolledBack" :key="n.text"><i class="exp" :class="{ on: n.expand }" /><svg class="ic14"><use :href="'#' + n.icon" /></svg><span>{{ n.text }}</span></li>
        </ul>
        <button type="button" class="splitter" aria-label="折叠面板"><i class="dot" /></button>
      </aside>

      <section class="view">
        <svg class="model" viewBox="208 100 816 614" preserveAspectRatio="xMidYMid meet" role="img" aria-label="零件1">
          <defs>
            <linearGradient id="lBase" x1="0" y1="0" x2="0" y2="1"><stop offset="0" stop-color="#b3b088" /><stop offset=".45" stop-color="#a4a180" /><stop offset="1" stop-color="#7f7c6e" /></linearGradient>
            <radialGradient id="lSpot" gradientUnits="userSpaceOnUse" cx="0" cy="0" r="100" gradientTransform="translate(534 375) rotate(-28) scale(.82 1.150)"><stop offset="0" stop-color="#e5e2d8" /><stop offset=".15" stop-color="#e0ddc6" /><stop offset=".35" stop-color="#cfcca3" stop-opacity=".8" /><stop offset=".65" stop-color="#b5b289" stop-opacity=".35" /><stop offset="1" stop-color="#aaa77c" stop-opacity="0" /></radialGradient>
            <radialGradient id="lEdge" gradientUnits="userSpaceOnUse" cx="645" cy="318" r="204"><stop offset=".55" stop-color="#827f6f" stop-opacity="0" /><stop offset=".86" stop-color="#827f6f" stop-opacity=".75" /><stop offset="1" stop-color="#86836f" stop-opacity=".9" /></radialGradient>
            <linearGradient id="rBase" x1="0" y1="0" x2="0" y2="1"><stop offset="0" stop-color="#dcdba8" /><stop offset=".25" stop-color="#cbc997" /><stop offset=".6" stop-color="#bab68c" /><stop offset="1" stop-color="#9d9781" /></linearGradient>
            <radialGradient id="rEdge" gradientUnits="userSpaceOnUse" cx="645" cy="250" r="250"><stop offset=".7" stop-color="#9c937f" stop-opacity="0" /><stop offset="1" stop-color="#9c937f" stop-opacity=".7" /></radialGradient>
            <radialGradient id="rSpot" gradientUnits="userSpaceOnUse" cx="0" cy="0" r="100" gradientTransform="translate(786 354) rotate(12) scale(.78 .98)"><stop offset="0" stop-color="#fffdd2" /><stop offset=".2" stop-color="#fff3cb" stop-opacity=".95" /><stop offset=".45" stop-color="#ede1b8" stop-opacity=".7" /><stop offset="1" stop-color="#dcd6a0" stop-opacity="0" /></radialGradient>
            <filter id="soft" x="-20%" y="-200%" width="140%" height="500%"><feGaussianBlur stdDeviation="3" /></filter>
            <path id="right" d="M645 318H847.500A202 202 0 0 1 751 490.500H645z" />
            <path id="left" d="M645 318H443A202 202 0 0 0 540 490.500H645z" />
          </defs>
          <rect x="433" y="309" width="222.500" height="190" fill="#fff7f2" />
          <use href="#right" fill="url(#rBase)" /><use href="#right" fill="url(#rEdge)" /><use href="#right" fill="url(#rSpot)" />
          <path d="M655 318H847" stroke="#f0ee7a" stroke-width="1" />
          <path d="M645 490.500H751" stroke="#f4ec1c" stroke-width="1.500" />
          <use href="#left" fill="url(#lBase)" /><use href="#left" fill="url(#lEdge)" /><use href="#left" fill="url(#lSpot)" />
          <use href="#left" fill="none" stroke="#000" stroke-width="1.700" />
          <rect x="433" y="309" width="222.500" height="190" fill="none" stroke="#fb8519" stroke-width="1.600" />
          <g stroke="#222" stroke-width="1"><path d="M645 318 354 512" /><path d="M540 491v84M645 491v84" stroke="#555" stroke-width="1.300" /><path d="M540 569h105" /></g>
          <path d="m477 430-11.500 5.200 2.200 3.300zM540 569l12-2v4zM645 569l-12-2v4zM539 489h2.500v2.500H539zM644 489h2.500v2.500H644z" fill="#000" />
          <path d="M645 318v-18M645 318h8" stroke="#ff2a2a" stroke-width="1.200" /><path d="m645 293.500 2 7.500h-4zM657 318l-7-2v4z" fill="#f00" />
          <text x="588" y="566" class="dim">27</text>
          <text class="dim" transform="translate(356 508) rotate(-33.700)">R52</text>
          <text x="435" y="324" class="plane-name">前视基准面</text>
          <path d="M236.500 677v-14" stroke="#0a5a0a" stroke-width="2.400" /><path d="m236.500 656 3 7.500h-6z" fill="#0a5a0a" />
          <path d="M237 677.500h14" stroke="#c00808" stroke-width="2.400" /><path d="m258.500 677.500-7.500 3v-6z" fill="#c00808" />
          <circle cx="236.500" cy="677.500" r="3" fill="#0a18c4" />
          <text x="235" y="652" class="axis y">Y</text><text x="261" y="678" class="axis x">X</text>
          <rect x="274" y="715" width="152" height="6" fill="#aaa" filter="url(#soft)" />
        </svg>
        <div class="view-name">*前视</div>

        <div class="hud">
          <div v-for="t in viewTools" :key="t.icon" class="vt">
            <button type="button" :aria-label="t.label"><svg class="ic14"><use :href="'#' + t.icon" /></svg></button>
            <button v-if="t.caret" type="button" class="vdrop" :aria-label="t.label + '菜单'"><i class="caret" /></button>
          </div>
        </div>
        <div class="wins">
          <button v-for="t in windowTools" :key="t.icon" type="button" :aria-label="t.label"><svg class="ic"><use :href="'#' + t.icon" /></svg></button>
        </div>
        <div class="confirm">
          <button type="button" aria-label="确定"><svg width="34" height="28" viewBox="0 0 34 28"><path d="M16 1.500H1.500V12c0 4 2.500 6.500 7 6.500H16" fill="none" stroke="#c5dfec" stroke-width="1.300" /><path d="m17 18.500 7-7v3.500c4 0 6.500-1 9-4-.5 6-4 9.500-9 10v4z" fill="#d3e6ef" stroke="#a9c3d0" /></svg></button>
          <button type="button" class="no" aria-label="取消"><svg width="18" height="18" viewBox="0 0 18 18"><path d="m4 1 5 4.500L14 1l3 3-4.500 5 4.500 5-3 3-5-4.500L4 17l-3-3 4.500-5L1 4z" fill="#f6c9c9" stroke="#e9adad" /></svg></button>
        </div>
        <div class="task">
          <button v-for="t in taskTabs" :key="t.label" type="button" :aria-label="t.label" :class="{ active: t.pressed }"><svg class="ic"><use :href="'#' + t.icon" /></svg></button>
        </div>
      </section>
    </main>
  </div>
</template>

<style>
html, body { margin: 0; overflow: hidden; }
</style>

<style scoped>
.app { height: 100vh; display: flex; flex-direction: column; background: #fff; color: #222; font: 9px/11px "Noto Sans", "Noto Sans CJK SC", sans-serif; }
.app * { box-sizing: border-box; }
.sprite { position: absolute; }
button { border: 0; margin: 0; padding: 0; background: none; color: inherit; font: inherit; display: flex; align-items: center; justify-content: center; white-space: nowrap; }
input { border: 0; outline: 0; padding: 0; background: none; font: inherit; min-width: 0; flex: 1; }
input::placeholder { color: #777; }
.ic { width: 16px; height: 16px; flex: none; display: block; }
.ic14 { width: 14px; height: 14px; flex: none; display: block; }
.ic12 { width: 12px; height: 12px; flex: none; display: block; }
.ic9 { width: 9px; height: 9px; flex: none; display: block; }
.caret { width: 0; height: 0; border: 2px solid transparent; border-top-color: #333; border-bottom: 0; }

.titlebar { flex: none; height: 27px; display: flex; align-items: stretch; background: #f7f7f7; border-top: 1px solid #dcdcdc; border-bottom: 2px solid #e0e0e0; font-size: 8px; }
.brand-area { width: 324px; display: flex; align-items: center; padding-left: 4px; border-right: 1px solid #d4d4d4; }
.ds { width: 16px; height: 17px; }
.brand { width: 62px; margin-left: 2px; color: #d9261c; font: italic 10px/12px "Open Sans", sans-serif; }
.menus { display: flex; gap: 8px; margin-left: 21px; }
.pin { margin-left: 8px; }
.quick { display: flex; padding-left: 16px; }
.q { width: 20px; }
.home { margin-right: 2px; }
.split { display: flex; }
.wide .q { width: 22px; }
.drop { width: 10px; }
.pressed .q { background: #b1b1b1; border: 1px solid #999; }
.pressed .drop { background: #fbfbfb; border: 1px solid #ccc; }
.doc { flex: 1; margin: 0; font: inherit; display: flex; align-items: center; justify-content: center; }
.search { width: 70px; height: 18px; margin-top: 3px; display: flex; align-items: center; gap: 6px; padding-left: 4px; background: #fff; border: 1px solid #c9c9c9; border-right: 0; }

.ribbon { flex: none; height: 57px; display: flex; background: #f7f7f7; border-bottom: 2px solid #d2d2d2; font-size: 8px; font-family: Roboto, "Noto Sans CJK SC", sans-serif; }
.ribbon span { display: block; }
.exit { width: 21px; margin-left: 3px; display: flex; flex-direction: column; }
.exit-main { flex: 1; flex-direction: column; justify-content: flex-start; padding-top: 2px; background: #b1b1b1; }
.exit-drop { height: 10px; border: 1px solid #ccc; background: #fbfbfb; }
.big { flex: none; height: 55px; flex-direction: column; justify-content: flex-start; padding: 2px 0 4px; }
.big .caret { margin-top: auto; }
.w20 { width: 20px; } .w21 { width: 21px; } .w22 { width: 22px; } .w24 { width: 24px; } .w27 { width: 27px; } .w32 { width: 32px; } .w40 { width: 40px; } .w42 { width: 42px; }
.off { color: #bdbdbd; }
.rule { border-right: 1px solid #dcdcdc; }
.big.pressed { background: #b1b1b1; border-right: 1px solid #888; }
.grid { width: 99px; display: grid; grid-template-columns: 26px 26px 26px 16px; grid-template-rows: repeat(3, 18px); padding-left: 1px; border-left: 1px solid #dcdcdc; border-right: 1px solid #dcdcdc; }
.cell { display: flex; align-items: center; }
.rows { width: 89px; display: grid; grid-template-rows: repeat(3, 18px); padding: 0 2px; border-right: 1px solid #dcdcdc; }
.rows button { justify-content: flex-start; gap: 3px; }
.rows .caret { margin-left: auto; }

.tabs { flex: none; height: 16px; display: flex; position: relative; z-index: 1; width: max-content; font-family: Roboto, "Noto Sans CJK SC", sans-serif; }
.tabs button { padding: 0 4px; background: #d2d2d2; border-right: 1px solid #9b9b9b; border-bottom: 1px solid #9b9b9b; }
.tabs .active { background: #f9f9f9; border-bottom-color: #f9f9f9; }

.work { flex: 1; min-height: 0; display: flex; }
.panel { position: relative; width: 208px; flex: none; background: #f7f7f7; border: 1px solid #bdbdbd; border-bottom: 0; border-left-color: #ddd; }
.grip { height: 13px; display: flex; align-items: center; justify-content: center; border-bottom: 1px solid #d2d2d2; }
.dot { width: 5px; height: 5px; border: 1px solid #999; border-radius: 50%; background: #e0e0e0; }
.ptabs { display: flex; height: 18px; margin-top: 2px; }
.ptabs button { width: 25px; background: #d2d2d2; border: 1px solid #bbb; border-left: 0; }
.ptabs .active { background: #f7f7f7; border-color: #f7f7f7; }
.ptabs .more { margin-left: auto; width: 18px; background: none; border: 0; }
.filter { height: 18px; margin: 1px 2px 0 1px; display: flex; align-items: center; padding-left: 2px; border: 1px solid #cfcfcf; }
.tree { list-style: none; margin: 0; padding: 0; display: flex; flex-direction: column; }
.tree li { flex: 1; min-height: 0; display: flex; align-items: center; white-space: nowrap; }
.tree span { margin-left: 3px; }
.live { height: 155px; }
.rolled { height: 62px; position: relative; color: #8b8b8b; }
.rolled::before { content: ""; position: absolute; top: -1px; left: 0; right: 0; height: 2px; background: #a5a5cc; }
.exp { width: 18px; height: 6px; flex: none; }
.exp::before { content: ""; display: none; margin-left: 6px; border: 3px solid transparent; border-left-color: #555; border-right: 0; width: 0; }
.exp.on::before { display: block; }
.root .exp { width: 2px; }
.root span { margin-left: 2px; }
.splitter { position: absolute; z-index: 1; left: 205px; top: 284px; width: 8px; height: 29px; border: 1px solid #bdbdbd; border-left: 0; background: #f7f7f7; }

.view { position: relative; flex: 1; min-width: 0; background: #fff; }
.model { display: block; width: 100%; height: 100%; }
.dim { font: 9px "Liberation Sans Narrow", Roboto, sans-serif; fill: #666; }
.plane-name { font: 700 15px "Noto Sans CJK SC", sans-serif; fill: #fa9a4a; stroke: #e6d9c2; stroke-width: 1px; paint-order: stroke; }
.axis { font: 7px "Noto Sans", sans-serif; }
.axis.y { fill: #5fb45f; }
.axis.x { fill: #f27c7c; }
.view-name { position: absolute; left: 4px; bottom: 0; font: 700 9px/10px "Noto Sans", "Noto Sans CJK SC", sans-serif; color: #111; }
.hud { position: absolute; top: -15px; left: 0; right: 0; display: flex; justify-content: center; height: 16px; }
.vt { display: flex; }
.vt button { width: 18px; }
.vt .vdrop { width: 8px; }
.vt .caret { border-top-color: #777; }
.wins { position: absolute; top: -15px; right: 5px; display: flex; gap: 2px; }
.confirm { position: absolute; top: 6px; right: 25px; display: flex; }
.confirm .no { margin: 22px 0 0 -1px; align-self: flex-start; }
.task { position: absolute; top: 19px; right: 0; width: 20px; border: 1px solid #a5a5a5; border-right: 0; display: flex; flex-direction: column; height: 124px; }
.task button { flex: 1; min-height: 0; background: #d2d2d2; border-bottom: 1px solid #a5a5a5; }
.task .active { background: #fff; }
</style>
